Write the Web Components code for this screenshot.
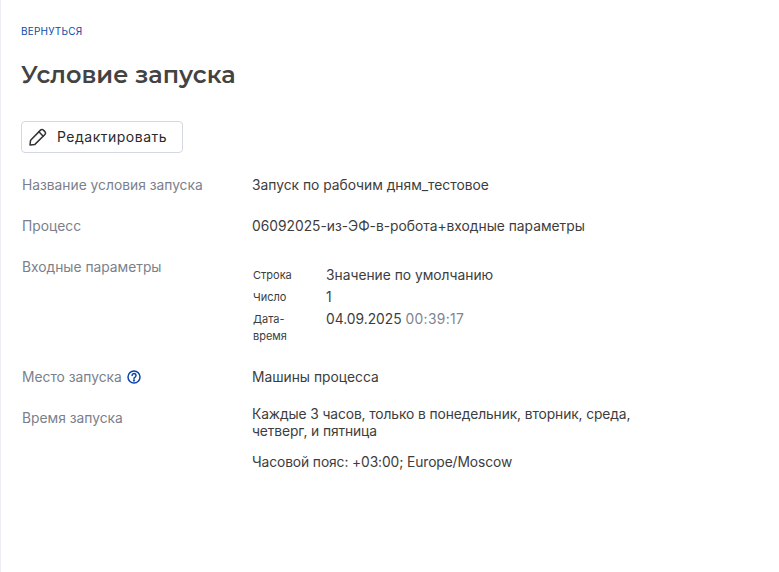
<!DOCTYPE html>
<html lang="ru">
<head>
<meta charset="utf-8">
<title>Условие запуска</title>
<style>
  html, body { margin: 0; height: 100%; background: #fff; }
  body { font-family: Inter, "Noto Sans", sans-serif; }
</style>
</head>
<body>
<trigger-page>
  <a slot="back" href="#">Вернуться</a>
  <span slot="title">Условие запуска</span>
  <edit-button slot="action">Редактировать</edit-button>

  <info-row label="Название условия запуска">Запуск по рабочим дням_тестовое</info-row>
  <info-row label="Процесс">06092025-из-ЭФ-в-робота+входные параметры</info-row>
  <info-row label="Входные параметры">
    <param-list>
      <param-item name="Строка">Значение по умолчанию</param-item>
      <param-item name="Число">1</param-item>
      <param-item name="Дата-время">04.09.2025 <time-part>00:39:17</time-part></param-item>
    </param-list>
  </info-row>
  <info-row label="Место запуска" hint>Машины процесса</info-row>
  <info-row label="Время запуска">
    <div style="margin-top:-4px;letter-spacing:-.1px">Каждые 3 часов, только в понедельник, вторник, среда, четверг, и пятница</div>
    <div style="margin-top:14px;letter-spacing:-.1px">Часовой пояс: +03:00; Europe/Moscow</div>
  </info-row>
</trigger-page>

<script>
class TriggerPage extends HTMLElement {
    constructor() {
        super();
        this.attachShadow({ mode: 'open' });
        this.shadowRoot.innerHTML = `
            <style>
                :host {
                    display: block;
                    box-sizing: border-box;
                    min-height: 572px;
                    padding: 25px 20px 0 20px;
                    border-left: 1px solid #eceef3;
                }
                .back { display: block; height: 12px; margin-bottom: 22px; }
                ::slotted(a) {
                    display: block;
                    font: 400 10px/12px Inter, sans-serif;
                    text-transform: uppercase;
                    letter-spacing: .2px;
                    color: #0b4aa8;
                    text-decoration: none;
                }
                h1 {
                    margin: 0 0 30px;
                    font: 600 24px/32px Montserrat, Inter, sans-serif;
                    color: #434343;
                }
                .rows { display: flex; flex-direction: column; gap: 24px; margin-top: 24px; }
            </style>
            <div class="back"><slot name="back"></slot></div>
            <h1><slot name="title"></slot></h1>
            <slot name="action"></slot>
            <div class="rows"><slot></slot></div>
        `;
    }
}

class EditButton extends HTMLElement {
    constructor() {
        super();
        this.attachShadow({ mode: 'open' });
        this.shadowRoot.innerHTML = `
            <style>
                :host {
                    display: flex;
                    align-items: center;
                    gap: 10px;
                    box-sizing: border-box;
                    width: 162px;
                    height: 32px;
                    padding: 0 7px;
                    border: 1px solid #d3d8e2;
                    border-radius: 4px;
                    font: 400 14px/20px Inter, sans-serif;
                    letter-spacing: .5px;
                    color: #2b2b2b;
                }
                svg { flex: none; }
            </style>
            <svg width="18" height="18" viewBox="0 0 18 18" fill="none" stroke="#333" stroke-width="1.5" stroke-linejoin="round" stroke-linecap="round">
                <path d="M1 17l.6-4.8L11.5 2.1a2 2 0 0 1 2.9 0l1.5 1.5a2 2 0 0 1 0 2.9L5.9 16.4z"/>
                <path d="M9.9 3.8l4.3 4.4"/>
            </svg>
            <slot></slot>
        `;
    }
}

class InfoRow extends HTMLElement {
    constructor() {
        super();
        this.attachShadow({ mode: 'open' });
        const hint = this.hasAttribute('hint') ? `
            <svg width="14" height="14" viewBox="0 0 14 14" fill="none" stroke="#0b44a8" stroke-width="1.5" stroke-linecap="round">
                <circle cx="7" cy="7" r="6"/>
                <path d="M5.1 5.5a1.95 1.95 0 1 1 3 1.6c-.7.4-1.1.8-1.1 1.5"/>
                <circle cx="7" cy="10.5" r=".4" fill="#0b44a8"/>
            </svg>` : '';
        this.shadowRoot.innerHTML = `
            <style>
                :host {
                    display: grid;
                    grid-template-columns: 231px 390px;
                    font: 400 13.8px/17px Inter, sans-serif;
                    color: #3d3d3d;
                }
                .label {
                    display: flex;
                    align-items: flex-start;
                    gap: 5px;
                    padding-left: 1px;
                    color: #7b7f8c;
                }
                .label svg { margin-top: 1px; }
            </style>
            <div class="label"><span>${this.getAttribute('label')}</span>${hint}</div>
            <div class="value"><slot></slot></div>
        `;
    }
}

class ParamList extends HTMLElement {
    constructor() {
        super();
        this.attachShadow({ mode: 'open' });
        this.shadowRoot.innerHTML = `
            <style>
                :host { display: flex; flex-direction: column; gap: 5px; padding: 8px 0 0 1px; }
            </style>
            <slot></slot>
        `;
    }
}

class ParamItem extends HTMLElement {
    constructor() {
        super();
        this.attachShadow({ mode: 'open' });
        this.shadowRoot.innerHTML = `
            <style>
                :host { display: grid; grid-template-columns: 73px 1fr; }
                .name { font-size: 11px; line-height: 17px; width: 50px; color: #3d3d3d; }
            </style>
            <div class="name">${this.getAttribute('name')}</div>
            <div><slot></slot></div>
        `;
    }
}

class TimePart extends HTMLElement {
    constructor() {
        super();
        this.attachShadow({ mode: 'open' });
        this.shadowRoot.innerHTML = `
            <style>:host { display: inline; color: #80848f; letter-spacing: .35px; }</style>
            <slot></slot>
        `;
    }
}

customElements.define('trigger-page', TriggerPage);
customElements.define('edit-button', EditButton);
customElements.define('info-row', InfoRow);
customElements.define('param-list', ParamList);
customElements.define('param-item', ParamItem);
customElements.define('time-part', TimePart);
</script>
</body>
</html>
